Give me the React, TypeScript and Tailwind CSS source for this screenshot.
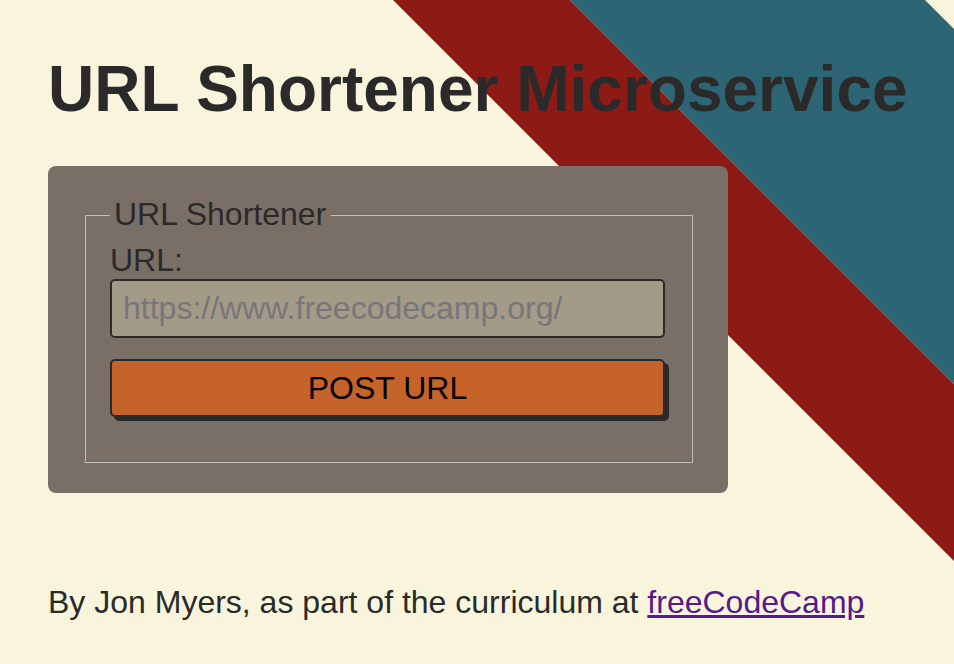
import React from "react";

export default function App() {
  return (
    <div className="relative min-h-[664px] w-full overflow-hidden bg-[#f8f5dc] font-['Liberation_Sans',Arial,sans-serif] text-[#2a2a2a]">
      <svg
        className="absolute inset-0 h-[664px] w-[954px]"
        viewBox="0 0 954 664"
        aria-hidden="true"
      >
        <polygon points="393,0 570,0 954,384 954,561" fill="#8e1a16" />
        <polygon points="570,0 925,0 954,29 954,384" fill="#2e6575" />
      </svg>

      <div className="relative flex flex-col px-[48px]">
        <h1 className="whitespace-nowrap pt-[53px] text-[64px] font-bold leading-[72px] text-[#2a2a2a]">
          URL Shortener Microservice
        </h1>

        <div className="mt-[41px] w-[680px] rounded-[8px] bg-[#7a6f66] px-[36px] pb-[30px] pt-[30px]">
          <fieldset className="h-[267px] w-[609px] border-2 border-[#c0c0c0] px-[24px] pb-[20px] pt-0 [border-style:groove]">
            <legend className="pl-[4px] pr-[5px] text-[32px] leading-[37px] text-[#2a2a2a]">
              URL Shortener
            </legend>
            <label className="mt-[9px] block text-[32px] leading-[37px] text-[#2a2a2a]">
              URL:
            </label>
            <div className="w-[555px] rounded-[5px] border-2 border-[#2a2a2a] bg-[#a39a87] px-[11px] py-[9px] text-[32px] leading-[37px] text-[#77777a]">
              https://www.freecodecamp.org/
            </div>
            <button
              type="button"
              className="mt-[21px] flex h-[58px] w-[555px] items-center justify-center rounded-[5px] border-2 border-[#2a2a2a] bg-[#c5632a] text-[32px] leading-[37px] text-black shadow-[4px_4px_0_0_#2a2a2a]"
            >
              POST URL
            </button>
          </fieldset>
        </div>

        <p className="mt-[91px] whitespace-nowrap text-[32px] leading-[37px] text-[#2a2a2a]">
          By Jon Myers, as part of the curriculum at{" "}
          <a href="#" className="text-[#551a8b] underline">
            freeCodeCamp
          </a>
        </p>
      </div>
    </div>
  );
}
